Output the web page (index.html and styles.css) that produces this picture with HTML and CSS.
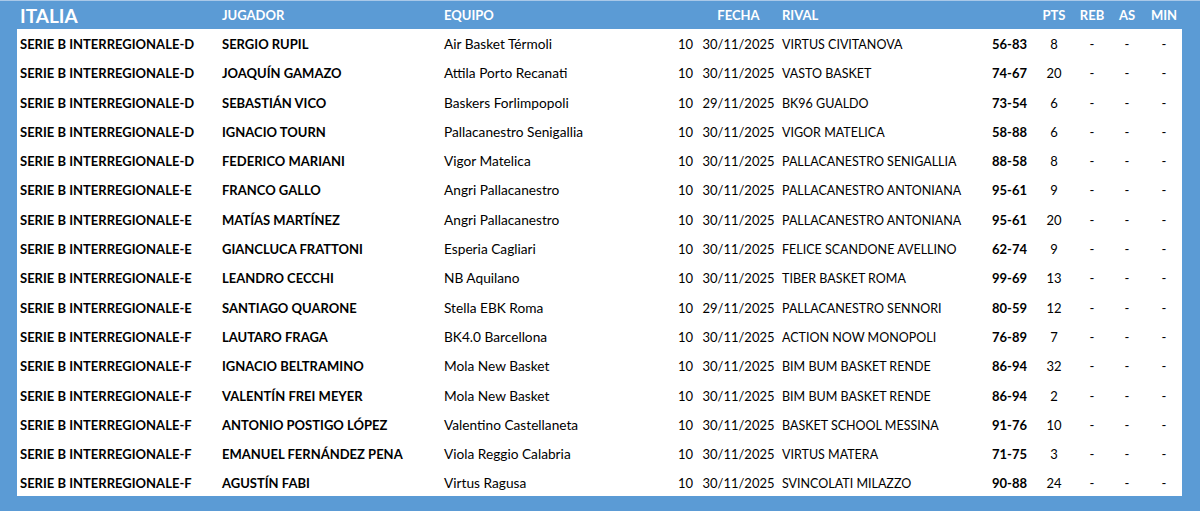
FILE: index.html
```html
<!DOCTYPE html>
<html lang="es">
<head>
<meta charset="utf-8">
<title>Italia</title>
<link rel="stylesheet" href="styles.css">
</head>
<body>
<div class="frame">
  <div class="row head">
    <div class="c-liga title">ITALIA</div>
    <div class="c-jug">JUGADOR</div>
    <div class="c-eq-h">EQUIPO</div>
    <div class="c-jor"></div>
    <div class="c-fecha">FECHA</div>
    <div class="c-rival-h">RIVAL</div>
    <div class="c-res"></div>
    <div class="c-num">PTS</div>
    <div class="c-num">REB</div>
    <div class="c-num">AS</div>
    <div class="c-num">MIN</div>
  </div>
  <div class="sheet">
    <div class="row"><div class="c-liga b">SERIE B INTERREGIONALE-D</div><div class="c-jug b">SERGIO RUPIL</div><div class="c-eq">Air Basket Térmoli</div><div class="c-jor">10</div><div class="c-fecha">30/11/2025</div><div class="c-rival">VIRTUS CIVITANOVA</div><div class="c-res b">56-83</div><div class="c-num">8</div><div class="c-num">-</div><div class="c-num">-</div><div class="c-num">-</div></div>
    <div class="row"><div class="c-liga b">SERIE B INTERREGIONALE-D</div><div class="c-jug b">JOAQUÍN GAMAZO</div><div class="c-eq">Attila Porto Recanati</div><div class="c-jor">10</div><div class="c-fecha">30/11/2025</div><div class="c-rival">VASTO BASKET</div><div class="c-res b">74-67</div><div class="c-num">20</div><div class="c-num">-</div><div class="c-num">-</div><div class="c-num">-</div></div>
    <div class="row"><div class="c-liga b">SERIE B INTERREGIONALE-D</div><div class="c-jug b">SEBASTIÁN VICO</div><div class="c-eq">Baskers Forlimpopoli</div><div class="c-jor">10</div><div class="c-fecha">29/11/2025</div><div class="c-rival">BK96 GUALDO</div><div class="c-res b">73-54</div><div class="c-num">6</div><div class="c-num">-</div><div class="c-num">-</div><div class="c-num">-</div></div>
    <div class="row"><div class="c-liga b">SERIE B INTERREGIONALE-D</div><div class="c-jug b">IGNACIO TOURN</div><div class="c-eq">Pallacanestro Senigallia</div><div class="c-jor">10</div><div class="c-fecha">30/11/2025</div><div class="c-rival">VIGOR MATELICA</div><div class="c-res b">58-88</div><div class="c-num">6</div><div class="c-num">-</div><div class="c-num">-</div><div class="c-num">-</div></div>
    <div class="row"><div class="c-liga b">SERIE B INTERREGIONALE-D</div><div class="c-jug b">FEDERICO MARIANI</div><div class="c-eq">Vigor Matelica</div><div class="c-jor">10</div><div class="c-fecha">30/11/2025</div><div class="c-rival">PALLACANESTRO SENIGALLIA</div><div class="c-res b">88-58</div><div class="c-num">8</div><div class="c-num">-</div><div class="c-num">-</div><div class="c-num">-</div></div>
    <div class="row"><div class="c-liga b">SERIE B INTERREGIONALE-E</div><div class="c-jug b">FRANCO GALLO</div><div class="c-eq">Angri Pallacanestro</div><div class="c-jor">10</div><div class="c-fecha">30/11/2025</div><div class="c-rival">PALLACANESTRO ANTONIANA</div><div class="c-res b">95-61</div><div class="c-num">9</div><div class="c-num">-</div><div class="c-num">-</div><div class="c-num">-</div></div>
    <div class="row"><div class="c-liga b">SERIE B INTERREGIONALE-E</div><div class="c-jug b">MATÍAS MARTÍNEZ</div><div class="c-eq">Angri Pallacanestro</div><div class="c-jor">10</div><div class="c-fecha">30/11/2025</div><div class="c-rival">PALLACANESTRO ANTONIANA</div><div class="c-res b">95-61</div><div class="c-num">20</div><div class="c-num">-</div><div class="c-num">-</div><div class="c-num">-</div></div>
    <div class="row"><div class="c-liga b">SERIE B INTERREGIONALE-E</div><div class="c-jug b">GIANCLUCA FRATTONI</div><div class="c-eq">Esperia Cagliari</div><div class="c-jor">10</div><div class="c-fecha">30/11/2025</div><div class="c-rival">FELICE SCANDONE AVELLINO</div><div class="c-res b">62-74</div><div class="c-num">9</div><div class="c-num">-</div><div class="c-num">-</div><div class="c-num">-</div></div>
    <div class="row"><div class="c-liga b">SERIE B INTERREGIONALE-E</div><div class="c-jug b">LEANDRO CECCHI</div><div class="c-eq">NB Aquilano</div><div class="c-jor">10</div><div class="c-fecha">30/11/2025</div><div class="c-rival">TIBER BASKET ROMA</div><div class="c-res b">99-69</div><div class="c-num">13</div><div class="c-num">-</div><div class="c-num">-</div><div class="c-num">-</div></div>
    <div class="row"><div class="c-liga b">SERIE B INTERREGIONALE-E</div><div class="c-jug b">SANTIAGO QUARONE</div><div class="c-eq">Stella EBK Roma</div><div class="c-jor">10</div><div class="c-fecha">29/11/2025</div><div class="c-rival">PALLACANESTRO SENNORI</div><div class="c-res b">80-59</div><div class="c-num">12</div><div class="c-num">-</div><div class="c-num">-</div><div class="c-num">-</div></div>
    <div class="row"><div class="c-liga b">SERIE B INTERREGIONALE-F</div><div class="c-jug b">LAUTARO FRAGA</div><div class="c-eq">BK4.0 Barcellona</div><div class="c-jor">10</div><div class="c-fecha">30/11/2025</div><div class="c-rival">ACTION NOW MONOPOLI</div><div class="c-res b">76-89</div><div class="c-num">7</div><div class="c-num">-</div><div class="c-num">-</div><div class="c-num">-</div></div>
    <div class="row"><div class="c-liga b">SERIE B INTERREGIONALE-F</div><div class="c-jug b">IGNACIO BELTRAMINO</div><div class="c-eq">Mola New Basket</div><div class="c-jor">10</div><div class="c-fecha">30/11/2025</div><div class="c-rival">BIM BUM BASKET RENDE</div><div class="c-res b">86-94</div><div class="c-num">32</div><div class="c-num">-</div><div class="c-num">-</div><div class="c-num">-</div></div>
    <div class="row"><div class="c-liga b">SERIE B INTERREGIONALE-F</div><div class="c-jug b">VALENTÍN FREI MEYER</div><div class="c-eq">Mola New Basket</div><div class="c-jor">10</div><div class="c-fecha">30/11/2025</div><div class="c-rival">BIM BUM BASKET RENDE</div><div class="c-res b">86-94</div><div class="c-num">2</div><div class="c-num">-</div><div class="c-num">-</div><div class="c-num">-</div></div>
    <div class="row"><div class="c-liga b">SERIE B INTERREGIONALE-F</div><div class="c-jug b">ANTONIO POSTIGO LÓPEZ</div><div class="c-eq">Valentino Castellaneta</div><div class="c-jor">10</div><div class="c-fecha">30/11/2025</div><div class="c-rival">BASKET SCHOOL MESSINA</div><div class="c-res b">91-76</div><div class="c-num">10</div><div class="c-num">-</div><div class="c-num">-</div><div class="c-num">-</div></div>
    <div class="row"><div class="c-liga b">SERIE B INTERREGIONALE-F</div><div class="c-jug b">EMANUEL FERNÁNDEZ PENA</div><div class="c-eq">Viola Reggio Calabria</div><div class="c-jor">10</div><div class="c-fecha">30/11/2025</div><div class="c-rival">VIRTUS MATERA</div><div class="c-res b">71-75</div><div class="c-num">3</div><div class="c-num">-</div><div class="c-num">-</div><div class="c-num">-</div></div>
    <div class="row"><div class="c-liga b">SERIE B INTERREGIONALE-F</div><div class="c-jug b">AGUSTÍN FABI</div><div class="c-eq">Virtus Ragusa</div><div class="c-jor">10</div><div class="c-fecha">30/11/2025</div><div class="c-rival">SVINCOLATI MILAZZO</div><div class="c-res b">90-88</div><div class="c-num">24</div><div class="c-num">-</div><div class="c-num">-</div><div class="c-num">-</div></div>
  </div>
</div>
</body>
</html>
```

FILE: styles.css
```css
* { box-sizing: border-box; }
html, body { margin: 0; padding: 0; }
body {
  width: 1200px;
  height: 511px;
  overflow: hidden;
  font-family: "Lato", "Liberation Sans", sans-serif;
  font-size: 13px;
  color: #000;
}
.frame {
  width: 1200px;
  height: 511px;
  background: #5b9bd5;
  border-top: 1px solid #a9c8e8;
  padding: 0 18px 0 17px;
}
.row {
  display: grid;
  grid-template-columns: 202px 222px 216px 40px 77px 183px 72px 44px 32px 38px 36px;
  padding-left: 3px;
  align-items: center;
  white-space: nowrap;
}
.head {
  height: 28px;
  color: #fff;
  font-weight: 700;
}
.head .title { font-size: 19px; }
.sheet {
  background: #fff;
  height: 467px;
}
.sheet .row {
  height: 29.3px;
  line-height: 29.3px;
  align-items: baseline;
}
.b { font-weight: 700; }
.c-eq { font-size: 13.7px; }
.c-jor { text-align: right; padding-right: 7px; }
.c-fecha { text-align: center; }
.c-rival, .c-rival-h { padding-left: 5px; }
.c-rival { font-size: 12.5px; }
.c-res { text-align: right; padding-right: 5px; }
.c-num { text-align: center; }
```
